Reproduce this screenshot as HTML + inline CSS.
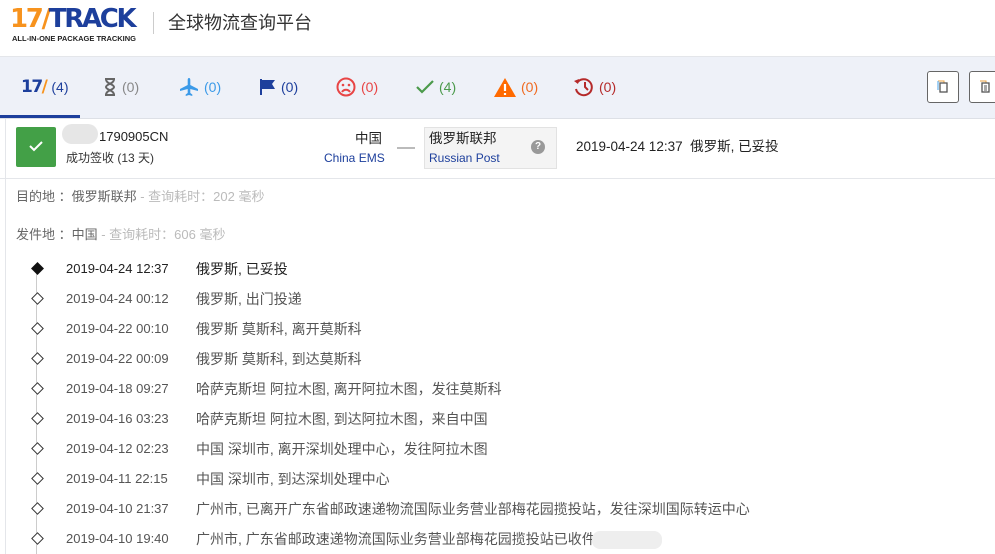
<!DOCTYPE html><html><head><meta charset="utf-8"><style>
body{margin:0;width:995px;height:554px;overflow:hidden;background:#fff;font-family:"Liberation Sans","Noto Sans CJK SC",sans-serif;position:relative}
.a{position:absolute;white-space:nowrap;line-height:16px}
.hdr{position:absolute;left:0;top:0;width:995px;height:56px;border-bottom:1px solid #e4e6ea;background:#fff}
.tabs{position:absolute;left:0;top:57px;width:995px;height:61px;background:#eef1f8;border-bottom:1px solid #dde0e6}
.tab{position:absolute;top:20px;font-size:14px;line-height:20px;display:flex;align-items:center;gap:5px}
.row{position:absolute;left:0;top:119px;width:995px;height:59px;border-bottom:1px solid #e4e6ea}
.tl .d{position:absolute;left:33px;width:7px;height:7px;border:1px solid #333;transform:rotate(45deg);background:#fff}
.tl .t{position:absolute;left:66px;font-size:13px;color:#555}
.tl .e{position:absolute;left:196px;font-size:14px;color:#555}
</style></head><body>
<div class="hdr">
<div class="a" style="left:10px;top:6px;font-size:26px;line-height:26px;font-weight:900;letter-spacing:-2.3px;color:#1d3f9c;font-family:'DejaVu Sans',sans-serif"><span style="color:#f7931e">17</span><span style="color:#f7931e">/</span>TRACK</div>
<div class="a" style="left:12px;top:31px;font-size:7.5px;font-weight:bold;color:#222">ALL-IN-ONE PACKAGE TRACKING</div>
<div class="a" style="left:153px;top:12px;width:1px;height:22px;background:#ccc"></div>
<div class="a" style="left:168px;top:13px;font-size:18px;line-height:20px;color:#333">全球物流查询平台</div>
</div>
<div class="tabs">
<div class="tab" style="left:21px;color:#1d3f9c"><b style="font-size:17px;letter-spacing:-1.5px;font-family:'DejaVu Sans'">17<span style="color:#f7931e">/</span></b>(4)</div>
<div class="a" style="left:0;top:58px;width:80px;height:3px;background:#1d3f9c"></div>
<div class="tab" style="left:103px;color:#888"><svg width="14" height="18" viewBox="0 0 14 18"><path d="M2 1h10M2 17h10M3 1c0 5 8 5 8 8s-8 3-8 8M11 1c0 5-8 5-8 8s8 3 8 8" stroke="#666" stroke-width="2" fill="none"/></svg> (0)</div>
<div class="tab" style="left:179px;color:#3b9ae8"><svg width="20" height="20" viewBox="0 0 20 20"><path d="M10 1c1 0 1.3 1 1.3 2v5l7.7 4v2l-7.7-2v4l2 1.5v1.5l-3.3-1-3.3 1v-1.5l2-1.5v-4L1 14v-2l7.7-4V3c0-1 .3-2 1.3-2z" fill="#3b9ae8"/></svg> (0)</div>
<div class="tab" style="left:260px;color:#1d3f9c"><svg width="16" height="18" viewBox="0 0 16 18"><path d="M1 1v16" stroke="#1d3f9c" stroke-width="2"/><path d="M2 2h13l-3 4 3 5H2z" fill="#1d3f9c"/></svg> (0)</div>
<div class="tab" style="left:336px;color:#e84545"><svg width="20" height="20" viewBox="0 0 20 20"><circle cx="10" cy="10" r="8.5" stroke="#e84545" stroke-width="2" fill="none"/><circle cx="7" cy="8" r="1.3" fill="#e84545"/><circle cx="13" cy="8" r="1.3" fill="#e84545"/><path d="M6 15c2-3 6-3 8 0" stroke="#e84545" stroke-width="2" fill="none"/></svg> (0)</div>
<div class="tab" style="left:416px;color:#4b9a4b"><svg width="18" height="16" viewBox="0 0 18 16"><path d="M1 8l5 5L17 2" stroke="#4b9a4b" stroke-width="2.2" fill="none"/></svg> (4)</div>
<div class="tab" style="left:494px;color:#f06a20"><svg width="22" height="19" viewBox="0 0 22 19"><path d="M11 0L22 19H0z" fill="#ff6a00"/><path d="M11 6v7M11 15v2" stroke="#fff" stroke-width="2.2"/></svg> (0)</div>
<div class="tab" style="left:573px;color:#b52a2a"><svg width="21" height="20" viewBox="0 0 21 20"><path d="M4 6a8 8 0 1 1-1 6" stroke="#b52a2a" stroke-width="2" fill="none"/><path d="M1 4l4 3 1-5z" fill="#b52a2a"/><path d="M12 5v5l3 3" stroke="#b52a2a" stroke-width="2" fill="none"/></svg> (0)</div>
<div class="a" style="left:927px;top:14px;width:30px;height:30px;border:1px solid #666;border-radius:3px;background:#fff"><svg style="position:absolute;left:9px;top:8px" width="12" height="14" viewBox="0 0 12 14"><path d="M1 1h6v2" stroke="#e8a040" fill="none"/><rect x="3" y="3" width="7" height="9" stroke="#555" fill="none" stroke-width="1.3"/><path d="M1 1v9" stroke="#4aa3e8"/></svg></div>
<div class="a" style="left:969px;top:14px;width:30px;height:30px;border:1px solid #666;border-radius:3px;background:#fff"><svg style="position:absolute;left:9px;top:8px" width="12" height="14" viewBox="0 0 12 14"><path d="M1 1h6v2" stroke="#e8a040" fill="none"/><rect x="3" y="3" width="7" height="9" stroke="#555" fill="none" stroke-width="1.3"/><path d="M5 6h3M5 8h3M5 10h3" stroke="#555"/></svg></div>
</div>
<div class="a" style="left:5px;top:119px;width:1px;height:435px;background:#e4e6ea"></div>
<div class="row">
<div class="a" style="left:16px;top:8px;width:40px;height:40px;background:#43a047;border-radius:2px"><svg style="position:absolute;left:13px;top:14px" width="14" height="11" viewBox="0 0 14 11"><path d="M1 5l4 4 8-8" stroke="#fff" stroke-width="2" fill="none"/></svg></div>
<div class="a" style="left:62px;top:5px;width:36px;height:20px;background:#e6e6e6;border-radius:10px"></div>
<div class="a" style="left:99px;top:10px;font-size:13px;color:#222">1790905CN</div>
<div class="a" style="left:66px;top:31px;font-size:12px;color:#333">成功签收 (13 天)</div>
<div class="a" style="left:355px;top:12px;font-size:13.5px;color:#222">中国</div>
<div class="a" style="left:324px;top:31px;font-size:12px;color:#1d3f9c">China EMS</div>
<div class="a" style="left:397px;top:28px;width:18px;height:2px;background:#bbb"></div>
<div class="a" style="left:424px;top:8px;width:131px;height:40px;background:#f4f4f4;border:1px solid #e2e2e2"></div>
<div class="a" style="left:429px;top:12px;font-size:13.5px;color:#222">俄罗斯联邦</div>
<div class="a" style="left:429px;top:31px;font-size:12px;color:#1d3f9c">Russian Post</div>
<div class="a" style="left:531px;top:21px;width:14px;height:14px;border-radius:7px;background:#999;color:#fff;font-size:10px;text-align:center;line-height:14px;font-weight:bold">?</div>
<div class="a" style="left:576px;top:20px;font-size:13.5px;color:#222">2019-04-24 12:37&nbsp; 俄罗斯, 已妥投</div>
</div>
<div class="a" style="left:16px;top:189px;font-size:13px;color:#666">目的地 ：俄罗斯联邦<span style="color:#bbb"> - 查询耗时：202 毫秒</span></div>
<div class="a" style="left:16px;top:227px;font-size:13px;color:#666">发件地 ：中国<span style="color:#bbb"> - 查询耗时：606 毫秒</span></div>
<div class="tl">
<div class="a" style="left:36px;top:272px;width:1px;height:282px;background:#ccc"></div>
<div class="d" style="top:264px;background:#111;border-color:#111"></div><div class="a t" style="top:261px;color:#222">2019-04-24 12:37</div><div class="a e" style="top:261px;color:#222">俄罗斯, 已妥投</div>
<div class="d" style="top:294px"></div><div class="a t" style="top:291px">2019-04-24 00:12</div><div class="a e" style="top:291px">俄罗斯, 出门投递</div>
<div class="d" style="top:324px"></div><div class="a t" style="top:321px">2019-04-22 00:10</div><div class="a e" style="top:321px">俄罗斯 莫斯科, 离开莫斯科</div>
<div class="d" style="top:354px"></div><div class="a t" style="top:351px">2019-04-22 00:09</div><div class="a e" style="top:351px">俄罗斯 莫斯科, 到达莫斯科</div>
<div class="d" style="top:384px"></div><div class="a t" style="top:381px">2019-04-18 09:27</div><div class="a e" style="top:381px">哈萨克斯坦 阿拉木图, 离开阿拉木图，发往莫斯科</div>
<div class="d" style="top:414px"></div><div class="a t" style="top:411px">2019-04-16 03:23</div><div class="a e" style="top:411px">哈萨克斯坦 阿拉木图, 到达阿拉木图，来自中国</div>
<div class="d" style="top:444px"></div><div class="a t" style="top:441px">2019-04-12 02:23</div><div class="a e" style="top:441px">中国 深圳市, 离开深圳处理中心，发往阿拉木图</div>
<div class="d" style="top:474px"></div><div class="a t" style="top:471px">2019-04-11 22:15</div><div class="a e" style="top:471px">中国 深圳市, 到达深圳处理中心</div>
<div class="d" style="top:504px"></div><div class="a t" style="top:501px">2019-04-10 21:37</div><div class="a e" style="top:501px">广州市, 已离开广东省邮政速递物流国际业务营业部梅花园揽投站，发往深圳国际转运中心</div>
<div class="d" style="top:534px"></div><div class="a t" style="top:531px">2019-04-10 19:40</div><div class="a e" style="top:531px">广州市, 广东省邮政速递物流国际业务营业部梅花园揽投站已收件</div>
<div class="a" style="left:592px;top:531px;width:70px;height:18px;background:#eee;border-radius:8px"></div>
</div>
</body></html>
